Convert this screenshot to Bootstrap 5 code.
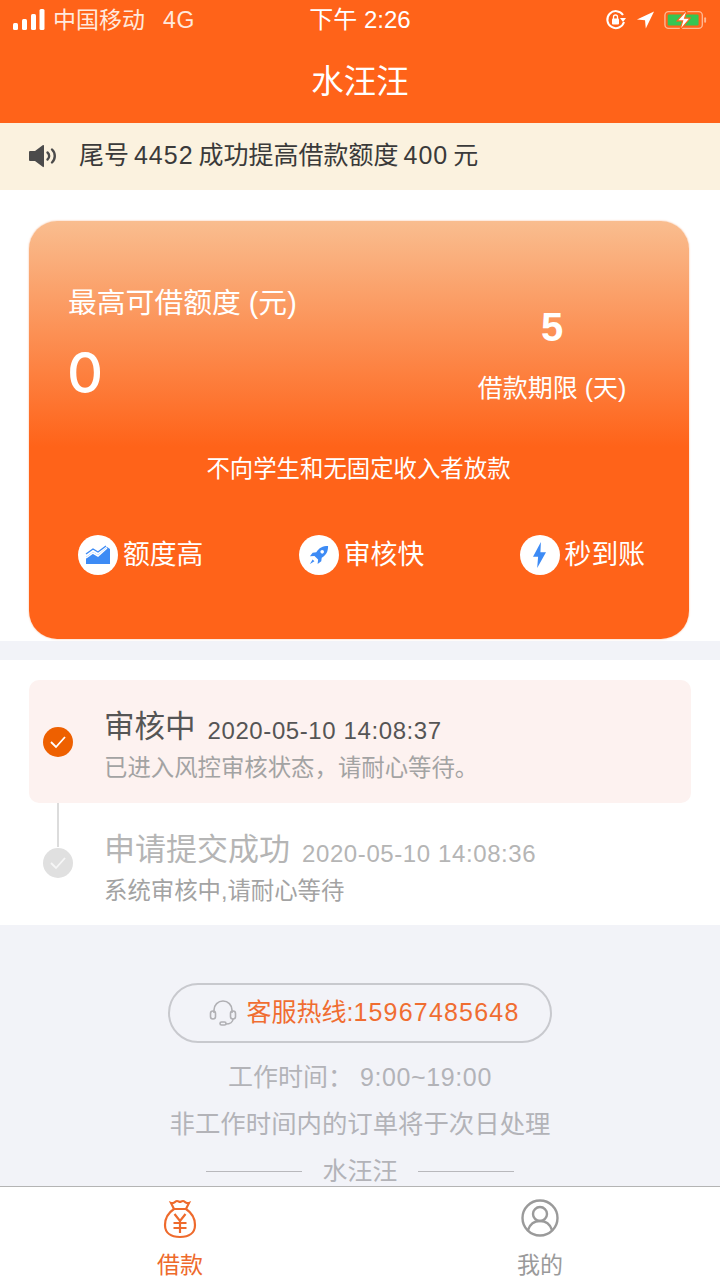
<!DOCTYPE html>
<html lang="zh-CN">
<head>
    <meta charset="UTF-8">
    <meta name="viewport" content="width=device-width, initial-scale=1.0">
    <title>水汪汪</title>
    <link href="https://cdn.jsdelivr.net/npm/bootstrap@5.3.2/dist/css/bootstrap.min.css" rel="stylesheet">
    <style>
        html, body { margin: 0; background: #fff; }
        body { font-family: "Liberation Sans", "Noto Sans CJK SC", sans-serif; }
        .app-shell { width: 720px; height: 1280px; overflow: hidden; }
        .num { letter-spacing: 1px; }
        .top-orange { background: #ff6319; height: 123px; color: #fff; }
        .status-bar { height: 40px; padding: 0 13px; line-height: 40px; }
        .carrier { font-size: 23px; margin-left: 8px; color: #ffe9dd; }
        .net { margin-left: 18px; color: #ffe9dd; font-size: 23px; letter-spacing: .6px; }
        .clock { left: 0; right: 0; top: 0; text-align: center; font-size: 24px; }
        .status-right { gap: 9px; }
        .page-title { font-size: 32.5px; line-height: 40px; padding-top: 22px; }
        .notice-bar { background: #fbf2df; height: 67px; padding-left: 28px; padding-bottom: 2px; color: #3a3a3a; font-size: 25px; gap: 20px; word-spacing: -2px; }
        .hero-wrap { height: 451px; padding: 31px 31px 0 29px; background: #fff; }
        .hero-box { height: 418px; border-radius: 28px; color: #fff; background: linear-gradient(180deg, #f9bd8f 0%, #ff6319 54%, #ff6319 100%); padding: 63px 40px 0 39px; box-shadow: 0 0 2px #f5b48f; }
        .limit-label { font-size: 28.8px; line-height: 38px; }
        .limit-value { font-family: Inter, "Liberation Sans", sans-serif; font-weight: 500; font-size: 56px; line-height: 70px; margin-top: 16px; margin-left: -1px; }
        .term-col { width: 200px; margin-right: -3px; padding-top: 20px; text-align: center; }
        .term-value { font-size: 40px; font-weight: 700; line-height: 46px; }
        .term-label { font-size: 25px; line-height: 36px; margin-top: 20px; }
        .hero-note { font-size: 23.4px; line-height: 34px; margin-top: 44px; }
        .hero-feats { margin-top: 49px; margin-right: 4px; margin-left: 10px; }
        .feat-text { font-size: 26.8px; line-height: 40px; }
        .feat-dot { width: 40px; height: 40px; border-radius: 50%; background: #fff; margin-right: 5px; }
        .sep-gap { height: 19px; background: #f2f3f8; }
        .steps-wrap { height: 265px; background: #fff; padding: 20px 29px 0 29px; }
        .step-active { height: 123px; background: #fdf2f0; border-radius: 10px; }
        .step-row { padding-left: 14px; }
        .step-mark { width: 30px; height: 30px; border-radius: 50%; flex: none; margin-right: 31px; }
        .mark-on { background: #ee6000; }
        .mark-off { background: #e0e0e0; margin-top: 2px; }
        .step-title { font-size: 30.5px; line-height: 40px; color: #555; }
        .step-time { font-size: 24px; color: #555; margin-left: 12px; letter-spacing: .6px; position: relative; top: 2px; }
        .step-desc { font-size: 23.4px; line-height: 32px; color: #a3a3a3; margin-top: 5px; }
        .step-body { padding-top: 6px; }
        .step-idle .step-title { color: #b5b5b5; font-size: 31px; }
        .step-idle .step-time { color: #b5b5b5; }
        .step-link { width: 2px; height: 44px; background: #dcdcdc; margin-left: 28px; }
        .step-idle { margin-top: -1px; }
        .step-idle-body { margin-top: -16px; }
        .footer-area { height: 261px; background: #f2f3f8; padding-top: 58px; color: #b3b3b8; overflow: hidden; }
        .hotline { width: 384px; height: 60px; border: 2px solid #c8c9ce; border-radius: 30px; color: #f06d31; font-size: 25px; gap: 9px; padding-left: 9px; }
        .hotline .num { letter-spacing: 1.2px; }
        .foot-line { font-size: 25.4px; line-height: 47px; }
        .foot-first { margin-top: 11px; font-size: 25px; }
        .foot-first .num { letter-spacing: .6px; }
        .rule-side { width: 96px; height: 1px; background: #b8b8bc; }
        .foot-brand { gap: 20px; font-size: 25px; line-height: 47px; }
        .tabbar { height: 94px; background: #fff; border-top: 1px solid #b4b4b4; }
        .tab-item { width: 360px; padding-top: 12px; font-size: 23px; line-height: 30px; color: #9a9a9a; }
        .tab-on { color: #ee6a2c; }
        .tab-item svg { display: block; margin-bottom: 11px; }
        .tab-item svg.tab-user { margin-bottom: 13px; }
    </style>
</head>
<body>
<div class="app-shell d-flex flex-column">
    <div class="top-orange">
        <div class="status-bar d-flex justify-content-between align-items-center position-relative">
            <div class="d-flex align-items-center">
                <svg width="32" height="22" viewBox="0 0 32 22" fill="#fff"><rect x="0" y="14" width="5" height="7" rx="1.5"/><rect x="9" y="10" width="5" height="11" rx="1.5"/><rect x="18" y="5" width="5" height="16" rx="1.5"/><rect x="26.500" y="0" width="5" height="21" rx="1.5"/></svg>
                <span class="carrier">中国移动</span><span class="net">4G</span>
            </div>
            <div class="clock position-absolute">下午 2:26</div>
            <div class="status-right d-flex align-items-center">
                <svg width="22" height="22" viewBox="0 0 22 22" fill="none" stroke="#fff" stroke-width="2"><path d="M19 13a8.500 8.500 0 1 1-1-7"/><path d="M15 9h6l-3 4z" fill="#fff" stroke="none"/><rect x="7" y="9.500" width="7" height="6" rx="1" fill="#fff" stroke="none"/><path d="M8.500 10V8a2 2 0 0 1 4 0v2" stroke-width="1.300"/></svg>
                <svg width="19" height="20" viewBox="0 0 20 20" fill="#fff"><path d="M19 1 1 9.500l8.500.8.800 8.700z"/></svg>
                <svg width="43" height="22" viewBox="0 0 46 22" fill="none"><rect x="1" y="2" width="40" height="18" rx="4" stroke="#ffb690" stroke-width="1.500"/><rect x="4" y="5" width="33" height="12" rx="1.500" fill="#36c552"/><rect x="43" y="8" width="2" height="6" rx="1" fill="#ffb690"/><path d="M25 0 14 12h6l-3 10 11-13h-6z" fill="#fff" stroke="#ff6319" stroke-width="1.200"/></svg>
            </div>
        </div>
        <div class="page-title text-center">水汪汪</div>
    </div>

    <div class="notice-bar d-flex align-items-center">
        <svg width="31" height="26" viewBox="0 0 31 26" fill="#4b4b4b"><path d="M1 9q0-1 1-1h5l8-6q1-.500 1 1v20q0 1.500-1 1l-8-6H2q-1 0-1-1z"/><path d="M19.500 9.500a4.500 4.500 0 0 1 0 7" fill="none" stroke="#4b4b4b" stroke-width="2.400" stroke-linecap="round"/><path d="M24 6.500a9 9 0 0 1 0 13" fill="none" stroke="#4b4b4b" stroke-width="2.400" stroke-linecap="round"/></svg>
        <span>尾号 <span class="num">4452</span> 成功提高借款额度 <span class="num">400</span> 元</span>
    </div>

    <div class="hero-wrap">
        <div class="hero-box">
            <div class="d-flex justify-content-between">
                <div>
                    <div class="limit-label">最高可借额度 (元)</div>
                    <div class="limit-value">0</div>
                </div>
                <div class="term-col">
                    <div class="term-value">5</div>
                    <div class="term-label">借款期限 (天)</div>
                </div>
            </div>
            <div class="hero-note text-center">不向学生和无固定收入者放款</div>
            <div class="hero-feats d-flex justify-content-between">
                <div class="d-flex align-items-center">
                    <div class="feat-dot d-flex align-items-center justify-content-center">
                        <svg width="26" height="20" viewBox="0 0 26 20"><path d="M1 12l7-5 5 3 9-8 3 2v15H1z" fill="#3d8bf5"/><path d="M1 9l7-5 5 3 8-6" fill="none" stroke="#3d8bf5" stroke-width="1.400"/><path d="M1 13l7-5 5 3 9-8" fill="none" stroke="#fff" stroke-width="1.500"/></svg>
                    </div>
                    <span class="feat-text">额度高</span>
                </div>
                <div class="d-flex align-items-center">
                    <div class="feat-dot d-flex align-items-center justify-content-center">
                        <svg width="20" height="20" viewBox="0 0 22 22" fill="#3d8bf5"><path d="M21 1c-6 0-10 2-13 7l-4 .5-3 4 5-.5 4 4-.5 5 4-3 .5-4c5-3 7-7 7-13z"/><circle cx="14.500" cy="7.500" r="2" fill="#fff"/><path d="M1 21l3-5 2 2z"/></svg>
                    </div>
                    <span class="feat-text">审核快</span>
                </div>
                <div class="d-flex align-items-center">
                    <div class="feat-dot d-flex align-items-center justify-content-center">
                        <svg width="13" height="26" viewBox="0 0 14 28" fill="#3d8bf5"><path d="M8.500 0 0 16h5.500L4.500 28 14 11H8z"/></svg>
                    </div>
                    <span class="feat-text">秒到账</span>
                </div>
            </div>
        </div>
    </div>

    <div class="sep-gap"></div>

    <div class="steps-wrap">
        <div class="step-active step-row d-flex align-items-center">
            <div class="step-mark mark-on d-flex align-items-center justify-content-center">
                <svg width="18" height="14" viewBox="0 0 18 14" fill="none" stroke="#fff" stroke-width="1.800"><path d="M2 7l5 5 9-10"/></svg>
            </div>
            <div class="step-body">
                <div><span class="step-title">审核中</span><span class="step-time">2020-05-10 14:08:37</span></div>
                <div class="step-desc">已进入风控审核状态，请耐心等待。</div>
            </div>
        </div>
        <div class="step-link"></div>
        <div class="step-idle step-row d-flex align-items-start">
            <div class="step-mark mark-off d-flex align-items-center justify-content-center">
                <svg width="18" height="14" viewBox="0 0 18 14" fill="none" stroke="#f6f6f6" stroke-width="1.800"><path d="M2 7l5 5 9-10"/></svg>
            </div>
            <div class="step-idle-body">
                <div><span class="step-title">申请提交成功</span><span class="step-time">2020-05-10 14:08:36</span></div>
                <div class="step-desc">系统审核中,请耐心等待</div>
            </div>
        </div>
    </div>

    <div class="footer-area d-flex flex-column align-items-center">
        <div class="hotline d-flex align-items-center justify-content-center flex-shrink-0">
            <svg width="28" height="28" viewBox="0 0 28 28" fill="none" stroke="#b0b0b4" stroke-width="1.600"><path d="M5 14v-3a9 9 0 0 1 18 0v3"/><rect x="1.500" y="12" width="5" height="8" rx="2.500"/><rect x="21.500" y="12" width="5" height="8" rx="2.500"/><path d="M24 20c0 3-3 5-7 5"/><rect x="11" y="23" width="6" height="3" rx="1.500"/></svg>
            <span>客服热线:<span class="num">15967485648</span></span>
        </div>
        <div class="foot-line foot-first">工作时间： <span class="num">9:00~19:00</span></div>
        <div class="foot-line">非工作时间内的订单将于次日处理</div>
        <div class="foot-brand d-flex align-items-center">
            <span class="rule-side"></span><span>水汪汪</span><span class="rule-side"></span>
        </div>
    </div>

    <div class="tabbar d-flex">
        <div class="tab-item tab-on d-flex flex-column align-items-center">
            <svg width="36" height="40" viewBox="0 0 36 40" fill="none" stroke="#ee6a2c" stroke-width="2.200"><path d="M12 10 9 4c3 1 4-2 6-2 1.500 0 2 1 3 1s1.500-1 3-1c2 0 3 3 6 2l-3 6z"/><path d="M12 10C6 14 3 19 3 26c0 8 6 12 15 12s15-4 15-12c0-7-3-12-9-16z"/><path d="M12.500 15l5.500 7 5.500-7M18 22v12M11.500 24h13M11.500 29h13"/></svg>
            <span>借款</span>
        </div>
        <div class="tab-item d-flex flex-column align-items-center">
            <svg class="tab-user" width="38" height="38" viewBox="0 0 38 38" fill="none" stroke="#9a9a9a" stroke-width="2.400"><circle cx="19" cy="19" r="17.500"/><circle cx="19" cy="15" r="7"/><path d="M7 31c2-6 6-9 12-9s10 3 12 9"/></svg>
            <span>我的</span>
        </div>
    </div>
</div>
<script src="https://cdn.jsdelivr.net/npm/bootstrap@5.3.2/dist/js/bootstrap.bundle.min.js"></script>
</body>
</html>
